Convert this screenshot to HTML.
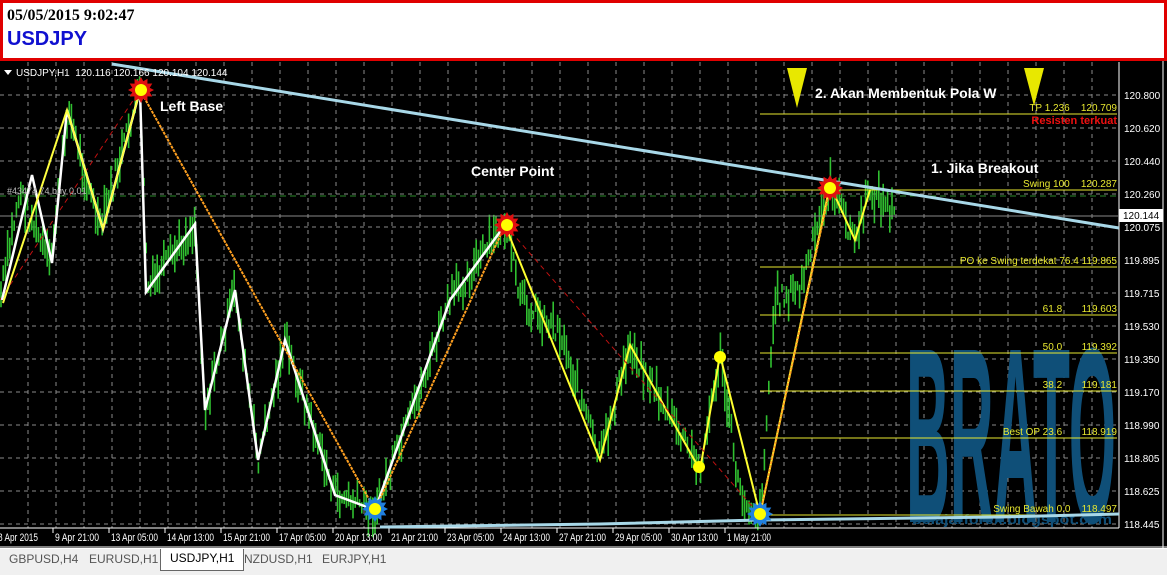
<!DOCTYPE html>
<html><head><meta charset="utf-8"><style>
html,body{margin:0;padding:0;width:1167px;height:574px;overflow:hidden;background:#000;font-family:"Liberation Sans",sans-serif}
#hdr{position:absolute;left:0;top:0;width:1161px;height:55px;border:3px solid #e00000;background:#fff}
#hdr .d{position:absolute;left:4px;top:4px;font-family:"Liberation Serif",serif;font-size:16px;font-weight:bold;color:#000}
#hdr .s{position:absolute;left:4px;top:25px;font-size:20px;font-weight:bold;color:#1010d0}
#tabs{position:absolute;left:0;top:548px;width:1167px;height:26px;background:#f0f0f0;border-top:1px solid #fff}
.tab{position:absolute;top:3px;font-size:12px;color:#555}
svg{position:absolute;left:0;top:0}
text{white-space:pre}
</style></head><body>
<div id="hdr"><div class="d">05/05/2015 9:02:47</div><div class="s">USDJPY</div></div>
<svg id="c" width="1167" height="548" viewBox="0 0 1167 548">
<rect x="0" y="61" width="1167" height="487" fill="#000"/>
<g id="grid" stroke="#8a8a8a" stroke-dasharray="4,4" stroke-width="1"></g>
<g id="candles" stroke="#30c030" stroke-width="1.6"></g>
<text x="906" y="522" font-family="Liberation Sans" font-weight="bold" font-size="250" fill="#0f4f78" textLength="210" lengthAdjust="spacingAndGlyphs">BRATO</text>
<text x="912" y="524" font-family="Liberation Sans" font-weight="bold" font-size="14" fill="#0f4f78" textLength="200" lengthAdjust="spacingAndGlyphs">belajarforex.blogspot.com</text>
<line x1="1119" y1="62" x2="1119" y2="528" stroke="#fff"/>
<line x1="0" y1="528" x2="1119" y2="528" stroke="#fff"/>
<line x1="0" y1="196" x2="1119" y2="196" stroke="#2a8a2a" stroke-dasharray="6,4"/>
<line x1="0" y1="216" x2="1119" y2="216" stroke="#888"/>
<g stroke="#e8e830" stroke-width="1">
<line x1="760" y1="114" x2="1117" y2="114"/><line x1="760" y1="190" x2="1117" y2="190"/><line x1="760" y1="267" x2="1117" y2="267"/><line x1="760" y1="315" x2="1117" y2="315"/><line x1="760" y1="353" x2="1117" y2="353"/><line x1="760" y1="391" x2="1117" y2="391"/><line x1="760" y1="438" x2="1117" y2="438"/><line x1="760" y1="515" x2="1117" y2="515"/>
</g>
<g font-family="Liberation Sans" font-size="10" fill="#e8e830" text-anchor="end">
<text x="1117" y="111">TP 1.236    120.709</text>
<text x="1117" y="187">Swing 100    120.287</text>
<text x="1117" y="264">PO ke Swing terdekat 76.4 119.865</text>
<text x="1117" y="312">61.8       119.603</text>
<text x="1117" y="350">50.0       119.392</text>
<text x="1117" y="388">38.2       119.181</text>
<text x="1117" y="435">Best OP 23.6       118.919</text>
<text x="1117" y="512">Swing Bawah 0.0    118.497</text>
</g>
<text x="1117" y="124" font-family="Liberation Sans" font-size="11" font-weight="bold" fill="#ee1010" text-anchor="end">Resisten terkuat</text>
<line x1="0" y1="300" x2="140" y2="90" stroke="#c01010" stroke-width="1" stroke-dasharray="5,4"/>
<polyline points="2,300 32,175 52,263 67,110 103,229 140,90 146,292 195,224 205,410 235,290 258,460 285,340 335,495 375,510 450,300 505,225" fill="none" stroke="#fff" stroke-width="2.5"/>
<polyline points="3,303 67,110 103,229 140,90" fill="none" stroke="#ffff40" stroke-width="2"/>
<polyline points="505,225 600,460 630,345 700,470 720,355 760,515 830,185 855,240 870,190" fill="none" stroke="#ffff30" stroke-width="2"/>
<line x1="140" y1="90" x2="375" y2="510" stroke="#ffa020" stroke-width="2" stroke-dasharray="3,1"/>
<line x1="375" y1="510" x2="505" y2="225" stroke="#ffa020" stroke-width="2" stroke-dasharray="3,1"/>
<line x1="760" y1="515" x2="830" y2="188" stroke="#ffa020" stroke-width="2" stroke-dasharray="3,1"/>
<line x1="505" y1="225" x2="760" y2="515" stroke="#c01010" stroke-width="1" stroke-dasharray="5,4"/>
<line x1="112" y1="64" x2="1119" y2="228" stroke="#a8d8e8" stroke-width="3"/>
<polyline points="380,527 600,524 760,520 1000,517 1119,514" fill="none" stroke="#a8d8e8" stroke-width="3"/>
<g id="stars"></g>
<polygon points="787,68 807,68 797,108" fill="#e8e800"/><polygon points="1024,68 1044,68 1034,106" fill="#e8e800"/>
<g font-family="Liberation Sans" font-weight="bold" font-size="14" fill="#fff">
<text x="160" y="111">Left Base</text>
<text x="471" y="176">Center Point</text>
<text x="931" y="173">1. Jika Breakout</text>
<text x="815" y="98">2. Akan Membentuk Pola W</text>
</g>
<text x="7" y="194" font-family="Liberation Sans" font-size="9" fill="#bbb">#43474 74 buy 0.01</text>
<polygon points="4,70 12,70 8,75" fill="#fff"/>
<text x="16" y="76" font-family="Liberation Sans" font-size="10" fill="#fff">USDJPY,H1  120.116 120.166 120.104 120.144</text>
<g font-family="Liberation Sans" font-size="10" fill="#fff" id="py"></g>
<rect x="1119" y="209" width="44" height="13" fill="#fff"/>
<text x="1123" y="219" font-family="Liberation Sans" font-size="10" fill="#000">120.144</text>
<g font-family="Liberation Sans" font-size="11" fill="#fff" id="tx"></g>
<line x1="0" y1="547" x2="1167" y2="547" stroke="#fff"/>
<line x1="1163" y1="61" x2="1163" y2="548" stroke="#fff"/>
</svg>
<div id="tabs">
<span class="tab" style="left:9px">GBPUSD,H4</span>
<span class="tab" style="left:89px">EURUSD,H1</span>
<span class="tab" style="left:160px;top:0;height:17px;padding:2px 9px;background:#fff;color:#000;border:1px solid #666;border-top:none">USDJPY,H1</span>
<span class="tab" style="left:244px">NZDUSD,H1</span>
<span class="tab" style="left:322px">EURJPY,H1</span>
</div>
<script>
var NS="http://www.w3.org/2000/svg";
function el(p,t,a,txt){var e=document.createElementNS(NS,t);for(var k in a)e.setAttribute(k,a[k]);if(txt)e.textContent=txt;document.getElementById(p).appendChild(e);return e;}
for(var x=28;x<1119;x+=28)el("grid","line",{x1:x,y1:62,x2:x,y2:528});
var ps=["120.800","120.620","120.440","120.260","120.075","119.895","119.715","119.530","119.350","119.170","118.990","118.805","118.625","118.445"];
for(var i=0;i<ps.length;i++){var y=95+i*33.0;el("grid","line",{x1:0,y1:y,x2:1119,y2:y});el("py","text",{x:1124,y:y+4},ps[i]);}
var tl=["8 Apr 2015","9 Apr 21:00","13 Apr 05:00","14 Apr 13:00","15 Apr 21:00","17 Apr 05:00","20 Apr 13:00","21 Apr 21:00","23 Apr 05:00","24 Apr 13:00","27 Apr 21:00","29 Apr 05:00","30 Apr 13:00","1 May 21:00"];
var tw=[40,44,47,47,47,47,47,47,47,47,47,47,47,44];
for(var i=0;i<tl.length;i++){var x=i==0?-2:55+(i-1)*56;el("tx","text",{x:x,y:541,textLength:tw[i],lengthAdjust:"spacingAndGlyphs"},tl[i]);
if(i>0)el("grid","line",{x1:x-2,y1:528,x2:x-2,y2:533,"stroke-dasharray":"none",stroke:"#fff"});}
var P=[[0,300],[20,190],[50,265],[68,110],[100,230],[140,90],[148,290],[195,225],[205,410],[235,290],[258,460],[285,340],[335,495],[375,510],[410,420],[450,300],[505,225],[520,300],[560,330],[600,460],[630,345],[700,470],[720,355],[740,495],[760,515],[775,300],[800,290],[830,185],[855,240],[870,190],[895,215]];
var s=7;function r(){s=(s*9301+49297)%233280;return s/233280;}
function yat(x){for(var i=0;i<P.length-1;i++){if(x>=P[i][0]&&x<=P[i+1][0]){var t=(x-P[i][0])/(P[i+1][0]-P[i][0]);return P[i][1]+t*(P[i+1][1]-P[i][1]);}}return 215;}
for(var x=1;x<895;x+=2.2){var y=yat(x)+(r()-0.5)*24;var h=4+r()*16;el("candles","line",{x1:x.toFixed(1),y1:y-h,x2:x.toFixed(1),y2:y+h});}
function star(cx,cy,col){var pts=[];for(var i=0;i<24;i++){var a=i*Math.PI/12,rr=i%2?9:13;pts.push((cx+rr*Math.sin(a)).toFixed(1)+","+(cy-rr*Math.cos(a)).toFixed(1));}
el("stars","polygon",{points:pts.join(" "),fill:col});el("stars","circle",{cx:cx,cy:cy,r:6,fill:"#ffff00"});}
star(141,90,"#e01010");star(507,225,"#e01010");star(830,188,"#e01010");star(375,509,"#2080e0");star(760,514,"#2080e0");
el("stars","circle",{cx:720,cy:357,r:6,fill:"#ffff00"});el("stars","circle",{cx:699,cy:467,r:6,fill:"#ffff00"});
</script>
</body></html>
